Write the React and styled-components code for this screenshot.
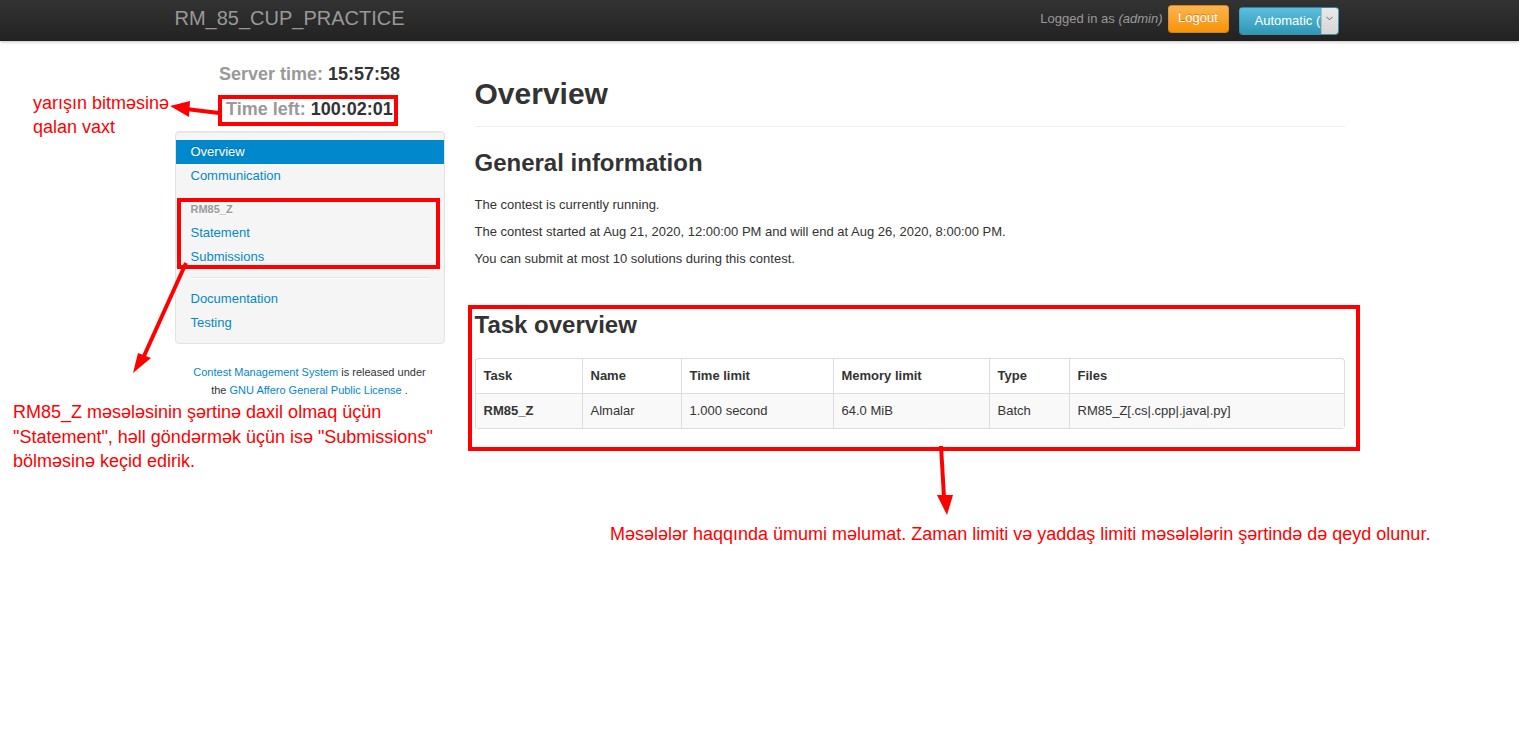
import React from 'react';
import styled, { createGlobalStyle } from 'styled-components';

const Global = createGlobalStyle`
  html, body { margin: 0; padding: 0; background: #fff; }
  body {
    font-family: "Liberation Sans", Arial, Helvetica, sans-serif;
    font-size: 13px;
    line-height: 18px;
    color: #333;
  }
  * { box-sizing: border-box; }
  a { color: #0088cc; text-decoration: none; }
`;

const Page = styled.div`
  position: relative;
  min-height: 750px;
  overflow: hidden;
`;

const Navbar = styled.div`
  height: 41px;
  background: linear-gradient(#333333, #222222);
  box-shadow: 0 1px 3px rgba(0, 0, 0, 0.25), inset 0 -1px 0 rgba(0, 0, 0, 0.1);
`;

const NavInner = styled.div`
  width: 1170px;
  margin: 0 auto;
  height: 100%;
  display: flex;
  align-items: flex-start;
`;

const Brand = styled.div`
  padding-top: 7px;
  font-size: 20px;
  line-height: 22px;
  color: #999;
`;

const NavRight = styled.div`
  margin-left: auto;
  margin-right: 6px;
  display: flex;
  align-items: flex-start;
`;

const LoggedIn = styled.span`
  margin-top: 10px;
  margin-right: 5px;
  color: #999;
  font-size: 13px;
  line-height: 18px;
  em { font-style: italic; }
`;

const LogoutButton = styled.div`
  margin-top: 5px;
  width: 61px;
  height: 28px;
  border-radius: 4px;
  border: 1px solid rgba(0, 0, 0, 0.1);
  border-bottom-color: rgba(0, 0, 0, 0.25);
  background: linear-gradient(#fbb450, #f89406);
  color: #fff;
  font-size: 13px;
  line-height: 23px;
  text-align: center;
  text-shadow: 0 -1px 0 rgba(0, 0, 0, 0.25);
`;

const LangSelect = styled.div`
  margin-top: 7px;
  margin-left: 10px;
  width: 100px;
  height: 28px;
  border-radius: 4px;
  border: 1px solid rgba(0, 0, 0, 0.1);
  border-bottom-color: rgba(0, 0, 0, 0.25);
  background: linear-gradient(#5bc0de, #2f96b4);
  display: flex;
  overflow: hidden;
`;

const LangText = styled.span`
  flex: 1;
  overflow: hidden;
  white-space: nowrap;
  padding-left: 15px;
  color: #fff;
  font-size: 13px;
  line-height: 26px;
`;

const LangArrow = styled.span`
  width: 17px;
  background: linear-gradient(#e9e9e9, #d6d6d6);
  border-left: 1px solid #bbb;
  display: flex;
  align-items: flex-start;
  justify-content: center;
  padding-top: 8px;
`;

const Container = styled.div`
  width: 1170px;
  margin: 0 auto;
  display: grid;
  grid-template-columns: 270px 870px;
  column-gap: 30px;
`;

const Sidebar = styled.div`
  padding-top: 16px;
`;

const ClockLine = styled.div`
  font-size: 18px;
  line-height: 35px;
  font-weight: bold;
  text-align: center;
  color: #333;
  span { color: #999; }
`;

const Well = styled.div`
  margin-top: 4px;
  padding: 8px 0;
  background: #f5f5f5;
  border: 1px solid #e3e3e3;
  border-radius: 4px;
  box-shadow: inset 0 1px 1px rgba(0, 0, 0, 0.05);
`;

const NavItem = styled.a`
  display: block;
  padding: 3px 15px;
  line-height: 18px;
  font-size: 13px;
  color: ${p => (p.$active ? '#fff' : '#0088cc')};
  background: ${p => (p.$active ? '#0088cc' : 'transparent')};
  text-shadow: ${p => (p.$active ? '0 -1px 0 rgba(0,0,0,0.2)' : '0 1px 0 rgba(255,255,255,0.5)')};
`;

const NavHeader = styled.div`
  margin-top: 9px;
  padding: 3px 15px;
  font-size: 11px;
  font-weight: bold;
  line-height: 18px;
  color: #999;
  text-transform: uppercase;
  text-shadow: 0 1px 0 rgba(255, 255, 255, 0.5);
`;

const Divider = styled.div`
  height: 2px;
  margin: 8px 15px;
  background: #e5e5e5;
  border-bottom: 1px solid #fff;
`;

const Footer = styled.div`
  margin-top: 19px;
  font-size: 11px;
  line-height: 18px;
  text-align: center;
  color: #333;
`;

const Main = styled.div`
  padding-top: 35px;
`;

const PageHeader = styled.div`
  padding-bottom: 14px;
  border-bottom: 1px solid #eee;
`;

const H1 = styled.h1`
  margin: 0;
  font-size: 30px;
  line-height: 36px;
  font-weight: bold;
  color: #333;
`;

const H2 = styled.h2`
  margin: ${p => p.$top || 18}px 0 ${p => p.$bottom || 15}px;
  font-size: 24px;
  line-height: 36px;
  font-weight: bold;
  color: #333;
`;

const P = styled.p`
  margin: 0 0 9px;
`;

const Table = styled.table`
  width: 869px;
  table-layout: fixed;
  border: 1px solid #ddd;
  border-left: 0;
  border-collapse: separate;
  border-spacing: 0;
  border-radius: 4px;
  th, td {
    padding: 8px;
    line-height: 18px;
    text-align: left;
    vertical-align: top;
    border-left: 1px solid #ddd;
    font-size: 13px;
  }
  th { font-weight: bold; }
  td { border-top: 1px solid #ddd; background: #f9f9f9; }
`;

const Overlay = styled.div`
  position: absolute;
  inset: 0;
  pointer-events: none;
`;

const RedBox = styled.div`
  position: absolute;
  border: 4px solid #ff0000;
`;

const Note = styled.div`
  position: absolute;
  color: #ff0000;
  font-size: 18px;
  line-height: ${p => p.$lh || 24}px;
  white-space: nowrap;
`;

const ArrowLayer = styled.svg`
  position: absolute;
  left: 0;
  top: 0;
`;

const cols = [107, 99, 152, 156, 80, 275];

export default function App() {
  return (
    <Page>
      <Global />
      <Navbar>
        <NavInner>
          <Brand>RM_85_CUP_PRACTICE</Brand>
          <NavRight>
            <LoggedIn>Logged in as <em>(admin)</em></LoggedIn>
            <LogoutButton>Logout</LogoutButton>
            <LangSelect>
              <LangText>Automatic (English)</LangText>
              <LangArrow>
                <svg width="7" height="5" viewBox="0 0 7 5">
                  <path d="M0.5 0.8 L3.5 3.8 L6.5 0.8" fill="none" stroke="#666" strokeWidth="1" />
                </svg>
              </LangArrow>
            </LangSelect>
          </NavRight>
        </NavInner>
      </Navbar>

      <Container>
        <Sidebar>
          <ClockLine><span>Server time: </span>15:57:58</ClockLine>
          <ClockLine><span>Time left: </span>100:02:01</ClockLine>
          <Well>
            <NavItem $active>Overview</NavItem>
            <NavItem>Communication</NavItem>
            <NavHeader>RM85_Z</NavHeader>
            <NavItem>Statement</NavItem>
            <NavItem>Submissions</NavItem>
            <Divider />
            <NavItem>Documentation</NavItem>
            <NavItem>Testing</NavItem>
          </Well>
          <Footer>
            <a>Contest Management System</a> is released under
            <br />
            the <a>GNU Affero General Public License</a> .
          </Footer>
        </Sidebar>

        <Main>
          <PageHeader>
            <H1>Overview</H1>
          </PageHeader>
          <H2>General information</H2>
          <P>The contest is currently running.</P>
          <P>The contest started at Aug 21, 2020, 12:00:00 PM and will end at Aug 26, 2020, 8:00:00 PM.</P>
          <P>You can submit at most 10 solutions during this contest.</P>
          <H2 $top={39} $bottom={15}>Task overview</H2>
          <Table>
            <colgroup>
              {cols.map((w, i) => <col key={i} style={{ width: w }} />)}
            </colgroup>
            <thead>
              <tr>
                <th>Task</th>
                <th>Name</th>
                <th>Time limit</th>
                <th>Memory limit</th>
                <th>Type</th>
                <th>Files</th>
              </tr>
            </thead>
            <tbody>
              <tr>
                <td><b>RM85_Z</b></td>
                <td>Almalar</td>
                <td>1.000 second</td>
                <td>64.0 MiB</td>
                <td>Batch</td>
                <td>RM85_Z[.cs|.cpp|.java|.py]</td>
              </tr>
            </tbody>
          </Table>
        </Main>
      </Container>

      <Overlay>
        <RedBox style={{ left: 218, top: 95, width: 180, height: 31 }} />
        <RedBox style={{ left: 177, top: 198, width: 263, height: 71 }} />
        <RedBox style={{ left: 468, top: 305, width: 892, height: 146 }} />

        <ArrowLayer width="1519" height="750" viewBox="0 0 1519 750">
          <g stroke="#ff0000" strokeWidth="4" fill="#ff0000">
            <line x1="219" y1="113" x2="186" y2="109" />
            <polygon points="170,106 190,101 189,117" stroke="none" />
            <line x1="186" y1="263" x2="144" y2="356" />
            <polygon points="133,373 138,353 151,358" stroke="none" />
            <line x1="941" y1="446" x2="944" y2="497" />
            <polygon points="947,515 937,495 953,495" stroke="none" />
          </g>
        </ArrowLayer>

        <Note style={{ left: 33, top: 91 }}>
          yarışın bitməsinə
          <br />
          qalan vaxt
        </Note>
        <Note style={{ left: 13, top: 400 }} $lh={24.5}>
          RM85_Z məsələsinin şərtinə daxil olmaq üçün
          <br />
          "Statement", həll göndərmək üçün isə "Submissions"
          <br />
          bölməsinə keçid edirik.
        </Note>
        <Note style={{ left: 610, top: 522 }}>
          Məsələlər haqqında ümumi məlumat. Zaman limiti və yaddaş limiti məsələlərin şərtində də qeyd olunur.
        </Note>
      </Overlay>
    </Page>
  );
}
